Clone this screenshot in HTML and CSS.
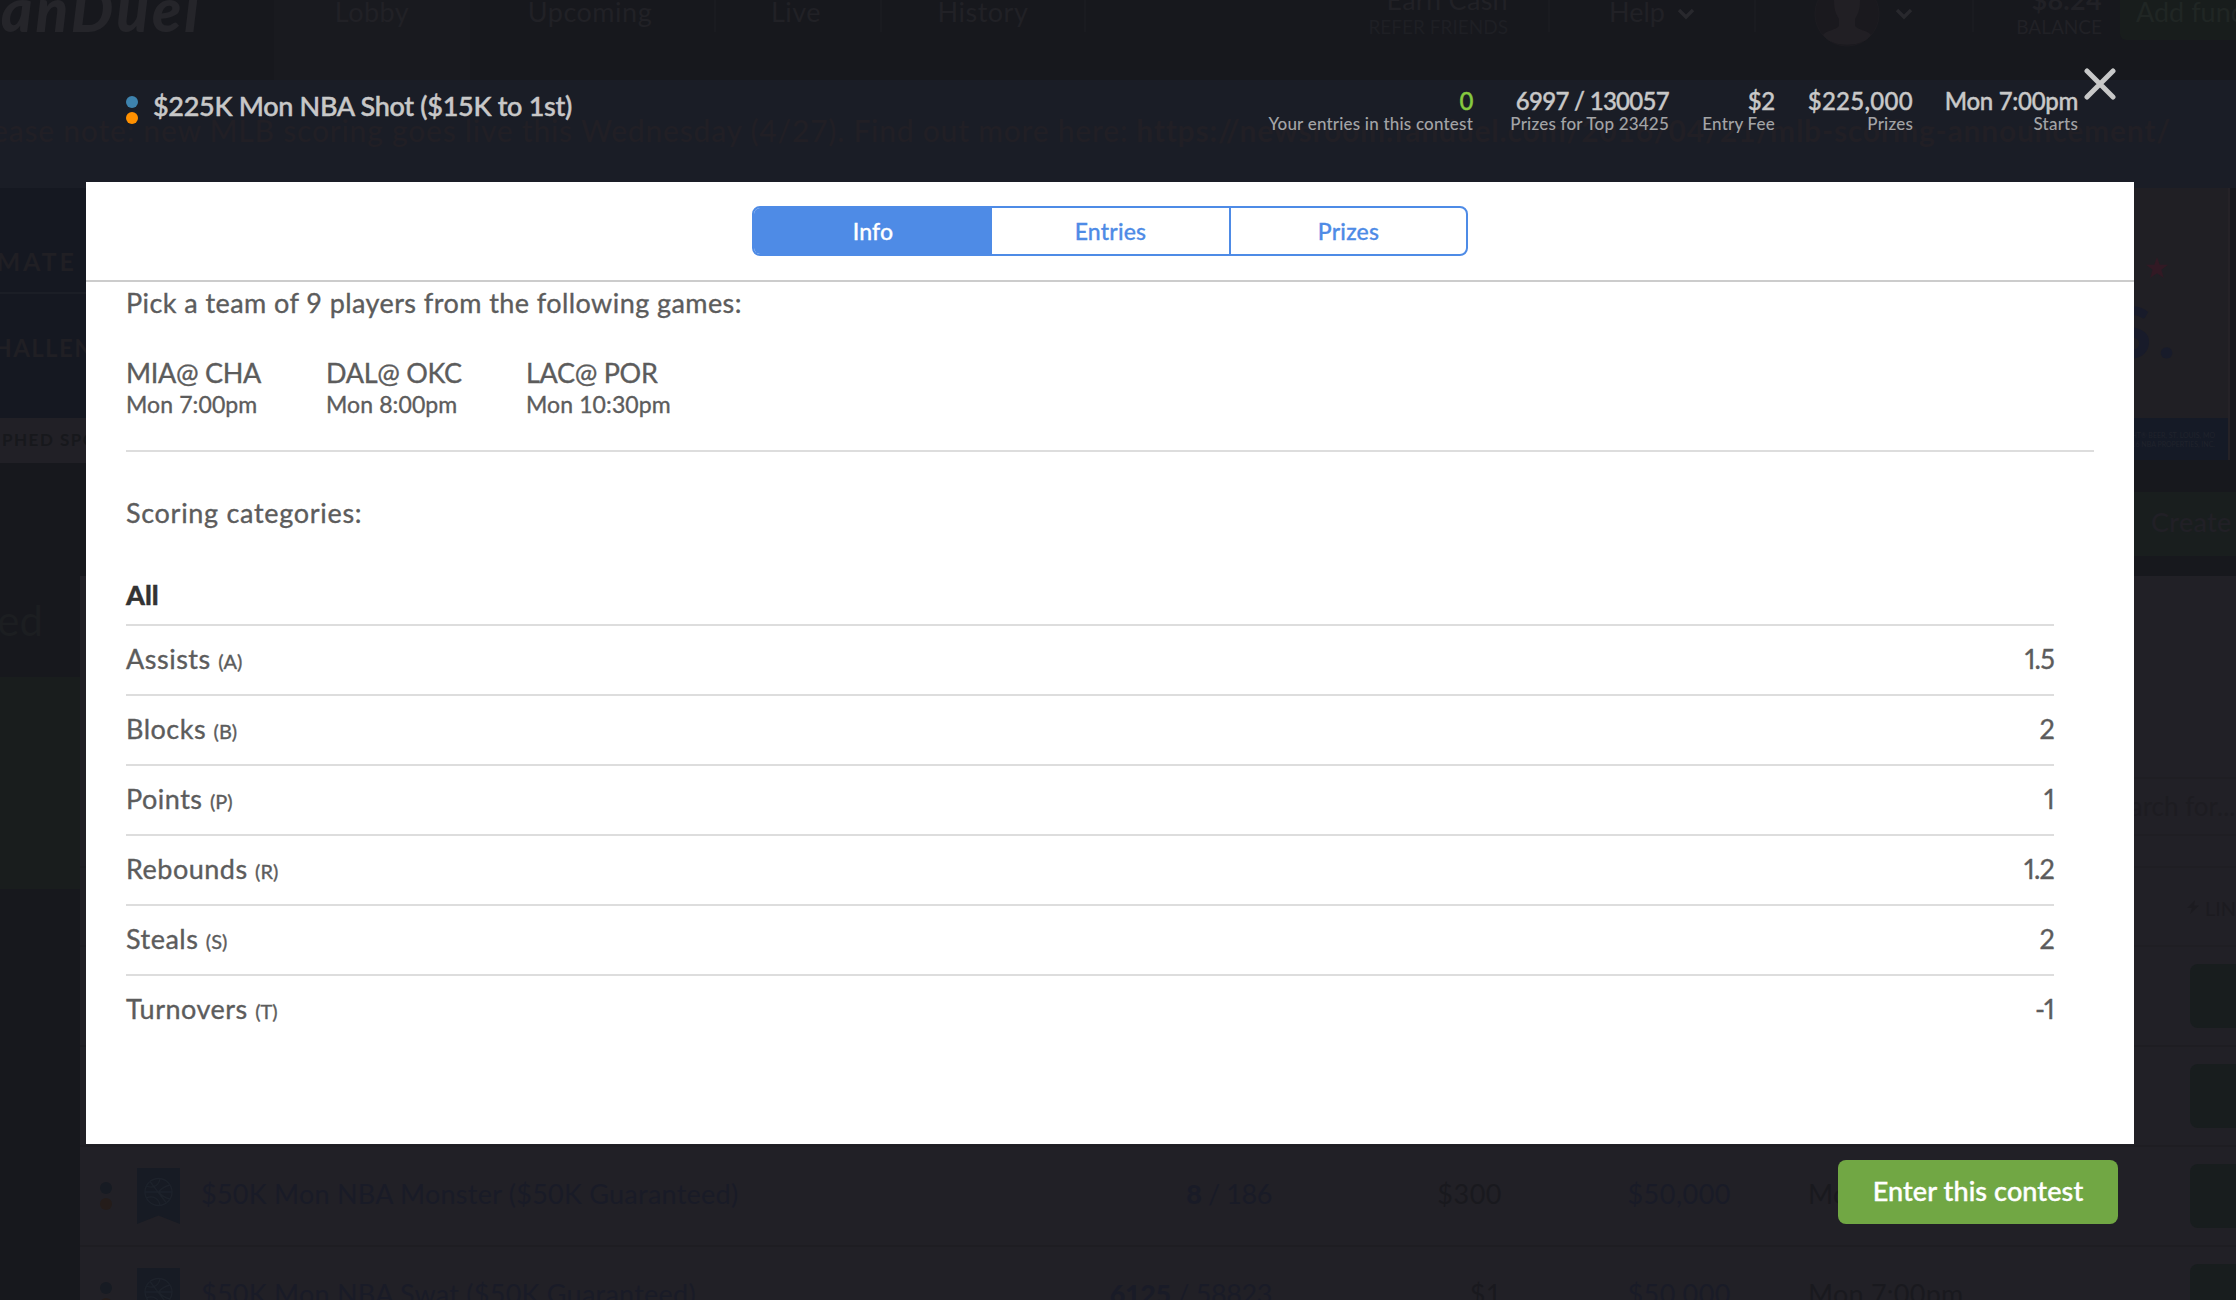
FILE: index.html
```
<!DOCTYPE html>
<html lang="en">
<head>
<meta charset="utf-8">
<title>$225K Mon NBA Shot</title>
<link rel="stylesheet" href="styles.css">
</head>
<body>
<svg class="defs" aria-hidden="true">
  <symbol id="chevron" viewBox="0 0 18 12"><path d="M2 2l7 7 7-7" fill="none" stroke="currentColor" stroke-width="3.4"/></symbol>
  <symbol id="ribbon" viewBox="0 0 43 56">
    <path d="M0 0h43v56L21.500 47.500 0 56z" fill="#171b24"/>
    <g fill="none" stroke="#1d222b" stroke-width="1.300"><circle cx="21.500" cy="24" r="13.500"/><path d="M8 24h27M9 18c8 3 13-1 14-7.500M13 13.500l16 21M9 30c8-3 13 1 14 7.500M33 17c-5 1-8 3-11.500 7 3.500 4 6.500 6 11.500 7"/></g>
  </symbol>
</svg>

<div class="lobby">
  <header class="topbar">
    <div class="logo">FanDuel</div>
    <nav class="nav">
      <a class="nav-item nav-lobby">Lobby</a>
      <a class="nav-item nav-upcoming">Upcoming</a>
      <a class="nav-item nav-live">Live</a>
      <a class="nav-item nav-history">History</a>
    </nav>
    <div class="account">
      <div class="pair earn"><span>Earn Cash</span><small>REFER FRIENDS</small></div>
      <div class="menu help">Help <svg class="chev"><use href="#chevron"/></svg></div>
      <div class="menu profile">
        <svg class="avatar" viewBox="0 0 66 66"><circle cx="33" cy="33" r="32" fill="#1a191e" stroke="#1d1c21"/><path d="M20 20a13 15 0 0 1 26 0c0 9-2 13-5 18v7c3 4 12 4 16 9-8 13-40 13-48 0 4-5 13-5 16-9v-7c-3-5-5-9-5-18z" fill="#211f24"/></svg>
        <svg class="chev"><use href="#chevron"/></svg>
      </div>
      <div class="pair balance"><b>$8.24</b><small>BALANCE</small></div>
      <div class="add-funds">Add funds</div>
    </div>
  </header>

  <div class="notice">Please note: new MLB scoring goes live this Wednesday (4/27). Find out more here: <b>https://newsroom.fanduel.com/2016/04/21/mlb-scoring-announcement/</b></div>

  <section class="promos">
    <div class="promo-left">
      <div class="promo-title">ULTIMATE</div>
      <div class="promo-sub">CHALLENGE</div>
      <div class="promo-strip">PHED SPORTS</div>
    </div>
    <div class="promo-right">
      <div class="promo-art">
        <svg class="star" viewBox="0 0 22 21"><path d="M11 0l2.700 7.700H22l-6.600 5L17.800 21 11 16.200 4.200 21l2.400-8.300L0 7.700h8.300z" fill="#321924"/></svg>
        <div class="promo-word">S.</div>
      </div>
      <div class="promo-legal">BUD LIGHT® BEER, ST. LOUIS, MO<br>©2016 NBA PROPERTIES, INC.</div>
    </div>
  </section>

  <div class="board">
    <aside class="side">
      <div class="side-title">Featured</div>
      <div class="side-card"></div>
    </aside>
    <main class="contests">
      <div class="create-row"><div class="create">Create</div></div>
      <div class="panel">
        <div class="filters"><div class="search">Search for...</div></div>
        <div class="links"><svg class="bolt" viewBox="0 0 12 14"><path d="M8 0L0 8h5l-2 6 9-8.500H7z" fill="#1c1b20"/></svg>LINEUPS</div>
        <div class="row"><i class="join"></i></div>
        <div class="row"><i class="join"></i></div>
        <div class="row">
          <span class="dots dim"><i></i><i></i></span><svg class="ribbon"><use href="#ribbon"/></svg>
          <span class="name">$50K Mon NBA Monster ($50K Guaranteed)</span>
          <span class="num entries"><b>8</b> / 186</span><span class="num">$300</span><span class="num blue">$50,000</span><span class="starts">Mon 7:00pm</span><i class="join"></i>
        </div>
        <div class="row">
          <span class="dots dim"><i></i><i></i></span><svg class="ribbon"><use href="#ribbon"/></svg>
          <span class="name">$50K Mon NBA Swat ($50K Guaranteed)</span>
          <span class="num entries"><b>6125</b> / 58823</span><span class="num">$1</span><span class="num blue">$50,000</span><span class="starts">Mon 7:00pm</span><i class="join"></i>
        </div>
      </div>
    </main>
  </div>
</div>

<div class="modal">
  <div class="modal-head">
    <span class="dots"><i></i><i></i></span>
    <h1>$225K Mon NBA Shot ($15K to 1st)</h1>
    <dl class="stats">
      <div class="stat-mine"><dd class="green">0</dd><dt>Your entries in this contest</dt></div>
      <div class="stat-size"><dd>6997 / 130057</dd><dt>Prizes for Top 23425</dt></div>
      <div class="stat-fee"><dd>$2</dd><dt>Entry Fee</dt></div>
      <div class="stat-prizes"><dd>$225,000</dd><dt>Prizes</dt></div>
      <div class="stat-starts"><dd>Mon 7:00pm</dd><dt>Starts</dt></div>
    </dl>
    <svg class="close" viewBox="0 0 32 32"><path d="M3 3l26 26M29 3L3 29" stroke="#c8c8c8" stroke-width="5" stroke-linecap="round"/></svg>
  </div>
  <div class="sheet">
    <div class="tabs"><div class="tab-group"><a class="tab active">Info</a><a class="tab">Entries</a><a class="tab">Prizes</a></div></div>
    <div class="info">
      <p class="pick">Pick a team of 9 players from the following games:</p>
      <ul class="games">
        <li><b>MIA@ CHA</b><span>Mon 7:00pm</span></li>
        <li><b>DAL@ OKC</b><span>Mon 8:00pm</span></li>
        <li><b>LAC@ POR</b><span>Mon 10:30pm</span></li>
      </ul>
      <p class="scoring-title">Scoring categories:</p>
      <div class="scoring">
        <h2>All</h2>
        <div class="cat"><span>Assists <small>(A)</small></span><span class="points">1.5</span></div>
        <div class="cat"><span>Blocks <small>(B)</small></span><span class="points">2</span></div>
        <div class="cat"><span>Points <small>(P)</small></span><span class="points">1</span></div>
        <div class="cat"><span>Rebounds <small>(R)</small></span><span class="points">1.2</span></div>
        <div class="cat"><span>Steals <small>(S)</small></span><span class="points">2</span></div>
        <div class="cat"><span>Turnovers <small>(T)</small></span><span class="points">-1</span></div>
      </div>
    </div>
  </div>
  <button class="enter">Enter this contest</button>
</div>
</body>
</html>
```
FILE: styles.css
```
* { box-sizing: border-box; margin: 0; padding: 0; }
body {
  position: relative;
  height: 1300px;
  overflow: hidden;
  background: #17181d;
  font: 400 27px/34px Lato, "Liberation Sans", sans-serif;
  color: #5c5c5c;
}
.defs { position: absolute; width: 0; height: 0; }
ul { list-style: none; }

/* Dimmed lobby behind the dialog */
.lobby { height: 1300px; overflow: hidden; color: #212126; white-space: nowrap; }
.topbar { display: flex; height: 80px; overflow: hidden; }
.logo {
  display: flex; justify-content: flex-end;
  width: 274px; padding-right: 72px; margin-top: -25px;
  font: italic 900 60px/68px Lato, sans-serif; letter-spacing: 3px; color: #25252a;
}
.nav { display: flex; letter-spacing: .5px; line-height: 24px; }
.nav-item { height: 32px; border-right: 2px solid #1a1b20; text-align: center; }
.nav-lobby { width: 196px; height: 80px; background: #191a1f; border: 0; }
.nav-upcoming { width: 246px; padding-right: 4px; }
.nav-live { width: 166px; padding-right: 4px; }
.nav-history { width: 204px; }
.account { display: flex; flex: 1; line-height: 24px; }
.pair { display: flex; flex-direction: column; align-items: flex-end; margin-top: -12px; height: 44px; letter-spacing: .3px; }
.pair small { font-size: 19px; line-height: 30px; letter-spacing: 0; }
.earn { width: 464px; padding-right: 40px; border-right: 2px solid #1a1b20; }
.earn small { color: #1e1f24; }
.menu { display: flex; gap: 12px; height: 32px; border-right: 2px solid #1a1b20; }
.help { width: 206px; padding-left: 59px; }
.profile { width: 218px; padding-left: 58px; gap: 15px; }
.avatar { width: 66px; height: 66px; margin-top: -19px; flex: none; }
.chev { width: 18px; height: 12px; margin-top: 8px; color: #28282d; flex: none; }
.balance { width: 128px; }
.add-funds { height: 40px; margin-left: 18px; padding-left: 16px; width: 140px; background: #181d1c; border-radius: 0 0 0 6px; color: #202624; flex: none; }

.notice {
  display: flex; justify-content: flex-end;
  height: 108px; padding: 15px 65px 0 0; gap: 8px;
  background: #1a1d26; color: #211f25;
  font-size: 30px; line-height: 70px; letter-spacing: .78px; font-weight: 500;
}
.promos { display: flex; justify-content: space-between; height: 275px; }
.promo-left { width: 90px; background: #151821; color: #201f24; font-weight: 700; }
.promo-title { display: flex; justify-content: flex-end; height: 106px; padding-right: 13px; border-bottom: 2px solid #1b1e26; font-size: 25px; line-height: 147px; letter-spacing: 3px; }
.promo-sub { display: flex; width: 90px; margin-left: -24px; height: 124px; font-size: 24px; line-height: 108px; letter-spacing: 1.4px; }
.promo-strip { height: 45px; background: #212026; color: #17181c; font-size: 17px; line-height: 43px; letter-spacing: 1.5px; padding-left: 2px; }
.promo-right { width: 102px; height: 272px; margin-right: 6px; overflow: hidden; background: #201f24; border-right: 2px solid #252227; }
.promo-art { display: flex; flex-direction: column; height: 230px; padding-top: 69px; align-items: flex-end; }
.star { width: 22px; height: 21px; margin-right: 60px; }
.promo-word { margin: 9px 46px 0 0; font: 900 70px/88px Lato, sans-serif; letter-spacing: 7px; color: #181b2a; }
.promo-legal { display: flow-root; height: 42px; background: #151a26; color: #20232c; font-size: 7px; line-height: 9px; text-align: right; padding: 13px 13px 0 0; margin-left: -50px; }

.board { display: flex; height: 837px; }
.side { width: 80px; flex: none; }
.side-title { display: flex; justify-content: flex-end; width: 43px; margin-top: 135px; height: 79px; font-size: 42px; line-height: 44px; color: #1c1e21; }
.side-card { height: 212px; background: #191d1d; }
.contests { flex: 1; min-width: 0; }
.create-row { display: flex; justify-content: flex-end; height: 113px; padding-top: 29px; }
.create { width: 126px; height: 64px; padding-left: 41px; background: #191e1e; color: #212026; line-height: 60px; letter-spacing: .3px; font-weight: 500; }
.panel { height: 724px; background: #212026; }
.filters { display: flex; justify-content: flex-end; height: 292px; padding-top: 201px; border-bottom: 2px solid #1f1e23; }
.search { width: 140px; height: 59px; padding-left: 6px; border: 2px solid #1f1e23; border-width: 2px 0; color: #1d1c21; font-size: 26px; line-height: 54px; }
.links { display: flex; gap: 6px; height: 79px; padding-left: 2107px; border-bottom: 2px solid #1f1e23; color: #1c1b20; font-size: 20px; line-height: 80px; }
.bolt { width: 12px; height: 14px; margin-top: 32px; flex: none; }
.row {
  display: grid; grid-template-columns: 37px 64px 871px 200px 230px 229px 459px 46px;
  height: 100px; padding-left: 20px; border-bottom: 2px solid #1e1d22; line-height: 94px; letter-spacing: .25px; color: #19191e;
}
.row .join { grid-column: 8; width: 120px; height: 64px; margin-top: 17px; background: #181d1e; border-radius: 8px; }
.ribbon { width: 43px; height: 56px; margin-top: 21px; }
.name, .entries, .num.blue { color: #191b27; }
.num { text-align: right; letter-spacing: .5px; }
.num.entries { letter-spacing: -.4px; }
.num b { font-weight: 900; }
.starts { padding-left: 77px; }

.dots { display: flex; flex-direction: column; gap: 4px; }
.dots i { width: 12px; height: 12px; border-radius: 50%; background: #3e83ae; }
.dots i + i { background: #ff9000; }
.dots.dim { padding-top: 35px; }
.dots.dim i { background: #171b23; }
.dots.dim i + i { background: #241c1a; }

/* Contest dialog */
.modal { position: absolute; inset: 0; padding: 0 102px 0 86px; display: flex; flex-direction: column; }
.modal-head { display: flex; height: 182px; padding: 89px 18px 0 40px; color: #c8c8c8; font-weight: 500; }
.modal-head .dots { margin-top: 7px; }
.modal-head h1 { margin-left: 15px; font-size: 27px; line-height: 34px; font-weight: 500; letter-spacing: -.3px; -webkit-text-stroke: .5px; }
.stats { display: flex; gap: 31px; margin-left: auto; text-align: right; white-space: nowrap; }
.stats dd { font-size: 24px; line-height: 24px; letter-spacing: -.3px; -webkit-text-stroke: .4px; }
.stats .green { color: #86c93f; }
.stats dt { font-size: 17px; line-height: 21px; font-weight: 500; letter-spacing: .2px; color: #a3a4a6; }
.stat-mine { width: 207px; }
.stat-size { width: 165px; }
.stat-size dd { letter-spacing: -.7px; }
.stat-fee { width: 75px; }
.stat-prizes { width: 107px; }
.stat-prizes dd { letter-spacing: .3px; }
.stat-starts { width: 134px; }
.close { width: 32px; height: 32px; margin: -21px 0 0 6px; }
.sheet { height: 962px; background: #fff; }
.tabs { display: flex; justify-content: center; height: 100px; padding-top: 24px; border-bottom: 2px solid #ccc; }
.tab-group { display: flex; width: 716px; height: 50px; border: 2px solid #4e8be6; border-radius: 8px; overflow: hidden; }
.tab { width: 237px; text-align: center; color: #4e8be6; font-size: 23px; line-height: 47px; font-weight: 500; letter-spacing: .2px; -webkit-text-stroke: .3px; }
.tab:first-child { width: 238px; }
.tab + .tab + .tab { border-left: 2px solid #4e8be6; }
.tab.active { background: #4e8be6; color: #fff; }
.info { padding: 4px 40px 0; letter-spacing: .35px; -webkit-text-stroke: .35px; }
.games { display: flex; margin-top: 36px; padding-bottom: 32px; border-bottom: 2px solid #ddd; }
.games li { display: flex; flex-direction: column; width: 200px; }
.games b { font-weight: 400; letter-spacing: -.3px; }
.games span { font-size: 23px; line-height: 28px; letter-spacing: .1px; }
.pick { letter-spacing: .43px; }
.scoring-title { margin-top: 44px; letter-spacing: .7px; }
.scoring { margin: 48px 40px 0 0; }
.scoring h2 { height: 48px; border-bottom: 2px solid #ddd; font-size: 27px; line-height: 34px; font-weight: 900; letter-spacing: 0; color: #333; }
.cat { display: flex; justify-content: space-between; height: 70px; padding-top: 16px; border-bottom: 2px solid #ddd; letter-spacing: .5px; }
.cat:last-child { border: 0; }
.cat small { font-size: 20px; letter-spacing: 0; }
.cat .points { letter-spacing: -.8px; font-feature-settings: "pnum"; }
.enter {
  align-self: flex-end; width: 280px; height: 64px; margin: 16px 16px 0 0; padding-bottom: 2px;
  border: 0; border-radius: 8px; background: #71a744; color: #fff;
  font: 500 27px/60px Lato, sans-serif; letter-spacing: .1px; -webkit-text-stroke: .4px;
}
```
